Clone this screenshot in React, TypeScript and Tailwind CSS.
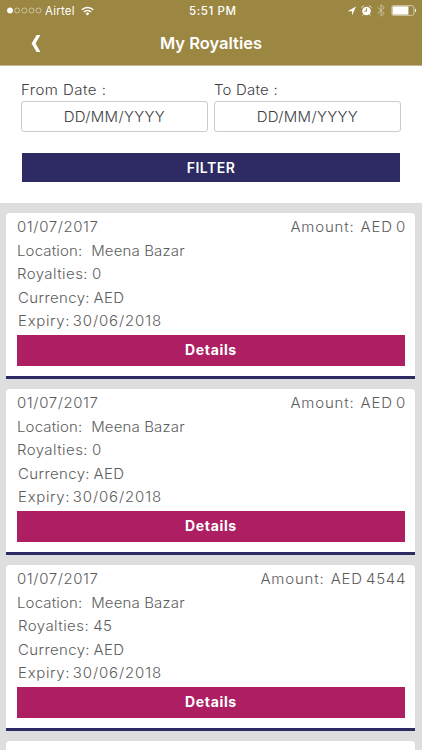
import { clsx } from "clsx";

const royalties = [
  { date: "01/07/2017", amount: "AED 0", location: "Meena Bazar", points: "0", currency: "AED", expiry: "30/06/2018" },
  { date: "01/07/2017", amount: "AED 0", location: "Meena Bazar", points: "0", currency: "AED", expiry: "30/06/2018" },
  { date: "01/07/2017", amount: "AED 4544", location: "Meena Bazar", points: "45", currency: "AED", expiry: "30/06/2018" },
];

function StatusBar() {
  return (
    <div className="relative flex h-[21px] items-center justify-between pl-[7px] pr-[5px] text-white">
      <div className="flex items-center">
        {/* Signal */}
        <svg className="mr-[3px] h-[7px] w-[35px]" viewBox="0 0 35 7" fill="none">
          <circle cx="3" cy="3.5" r="2.9" fill="#fff" />
          {[10.2, 17.3, 24.4, 31.5].map((cx) => (
            <circle key={cx} cx={cx} cy="3.5" r="2.5" stroke="#fff" strokeWidth="0.6" opacity="0.8" />
          ))}
        </svg>
        <span className="w-[31px] whitespace-nowrap pt-px text-[11.5px] leading-[21px] tracking-[0.2px]">Airtel</span>
        {/* Wifi */}
        <svg className="ml-[5px] h-[10px] w-[13px]" viewBox="0 0 13 10" fill="none" stroke="#fff" strokeWidth="1.6">
          <path d="M0.8 3.8a8.1 8.1 0 0 1 11.4 0" />
          <path d="M2.9 6a5.1 5.1 0 0 1 7.2 0" />
          <path d="M6.5 9.5 4.5 7.5a2.8 2.8 0 0 1 4 0z" fill="#fff" stroke="none" />
        </svg>
      </div>
      <span className="absolute left-[189px] top-0 whitespace-nowrap text-[11.5px] font-medium leading-[22px] tracking-[0.6px]">
        5:51 PM
      </span>
      <div className="flex items-center">
        {/* Location arrow */}
        <svg className="h-[10px] w-[9px]" viewBox="0 0 9 10" fill="#fff">
          <path d="M9 0.5 5.1 9.6V5.2H0.6z" />
        </svg>
        {/* Alarm */}
        <svg className="ml-[5px] h-[11px] w-[11px]" viewBox="0 0 11 11" fill="none">
          <circle cx="5.5" cy="6" r="4.3" fill="#fff" />
          <path d="M0.5 2.6 2.6 0.7M10.5 2.6 8.4 0.7M2.6 9.2 1.7 10.4M8.4 9.2l.9 1.2" stroke="#fff" strokeWidth="0.9" />
          <path d="M5.5 3.3v2.9H3.4" stroke="#9b8642" strokeWidth="1" />
        </svg>
        {/* Bluetooth */}
        <svg className="ml-[5px] h-[13px] w-[8px]" viewBox="0 0 8 13" fill="none" stroke="#cdc2a0" strokeWidth="1">
          <path d="M0.6 3.4 7.2 9.4 4 12.2V0.8l3.2 2.8L0.6 9.6" />
        </svg>
        {/* Battery */}
        <svg className="ml-[6px] h-[11px] w-[26px]" viewBox="0 0 26 11" fill="none">
          <rect x="0.9" y="0.7" width="22" height="9.6" rx="1.4" stroke="#e4dcc4" strokeWidth="0.8" />
          <rect x="1.6" y="1.4" width="15.8" height="8.2" fill="#fff" />
          <path d="M24 3.8c1.6.2 1.6 3.2 0 3.4z" fill="#fff" />
        </svg>
      </div>
    </div>
  );
}

function DateField({ label, className }: { label: string; className?: string }) {
  return (
    <label className="flex w-[187px] flex-col text-[14px] font-light text-[#3d3d42]">
      <span className={clsx("h-[23px] origin-left scale-x-107 whitespace-pre leading-[23px]", className)}>{label}</span>
      <span className="flex h-[31px] items-center justify-center rounded-[3px] border border-[#cbcbcb] pb-px">
        <span className="scale-x-107 tracking-[0.3px]">DD/MM/YYYY</span>
      </span>
    </label>
  );
}

function RoyaltyCard({ item }: { item: (typeof royalties)[number] }) {
  return (
    <div className="h-[166px] shrink-0 rounded-t-[4px] border-b-[3px] border-[#2d2a64] bg-white pl-[11px] pr-[10px] pt-[2px] text-[14px] font-light leading-[23.5px] text-[#5c5c5c]">
      <div className="flex justify-between whitespace-pre">
        <span className="origin-left scale-x-107 tracking-[0.55px]">{item.date}</span>
        <span className="-mr-px origin-right scale-x-107 tracking-[0.75px] [word-spacing:-1.8px]">
          {"Amount:  " + item.amount}
        </span>
      </div>
      <p className="origin-left scale-x-107 whitespace-pre tracking-[0.15px]">{"Location:  " + item.location}</p>
      <p className={clsx("origin-left scale-x-107 tracking-[0.4px] [word-spacing:-0.5px]", item.points.length > 1 && "pl-px")}>
        Royalties: {item.points}
      </p>
      <p className="origin-left scale-x-107 pl-px tracking-[0.35px] [word-spacing:-1px]">Currency: {item.currency}</p>
      <p className="origin-left scale-x-107 pl-px tracking-[0.6px] [word-spacing:-2px]">
        Expiry: <span className="tracking-[0.8px]">{item.expiry}</span>
      </p>
      <button className="mt-[2.5px] block h-[31px] w-full bg-[#ad1e63] pb-px text-[14px] font-bold tracking-[0.65px] text-white">
        Details
      </button>
    </div>
  );
}

export default function App() {
  return (
    <div className="flex h-[750px] w-[422px] flex-col overflow-hidden bg-[#dedede] font-['Inter',sans-serif]">
      <header className="h-[66px] shrink-0 border-b border-[#c4b893] bg-[#9b8642]">
        <StatusBar />
        <div className="relative flex h-[44px] items-center justify-center text-white">
          <button className="absolute left-[31px] top-[14px]" aria-label="Back">
            <svg className="h-[17px] w-[10px]" viewBox="0 0 10 17" fill="#fff">
              <path d="M5.6 0H9.4L4.6 8.5 9.4 17H5.6L0.6 8.5z" />
            </svg>
          </button>
          <h1 className="text-[16.5px] font-semibold">My Royalties</h1>
        </div>
      </header>

      {/* Filter */}
      <section className="h-[137px] shrink-0 bg-white px-[21px] pt-[12px]">
        <div className="flex gap-[6px]">
          <DateField label="From Date :" className="tracking-[0.45px]" />
          <DateField label="To Date :" className="tracking-[0.2px]" />
        </div>
        <button className="ml-px mt-[21px] block h-[29px] w-[378px] bg-[#2d2a64] pb-px text-[14px] font-semibold tracking-[0.5px] text-white">
          FILTER
        </button>
      </section>

      {/* List */}
      <section className="flex flex-col gap-[10px] pl-[6px] pr-[7px] pt-[10px]">
        {royalties.map((item, i) => (
          <RoyaltyCard key={i} item={item} />
        ))}
        <div className="h-[20px] shrink-0 rounded-t-[4px] bg-white" />
      </section>
    </div>
  );
}
